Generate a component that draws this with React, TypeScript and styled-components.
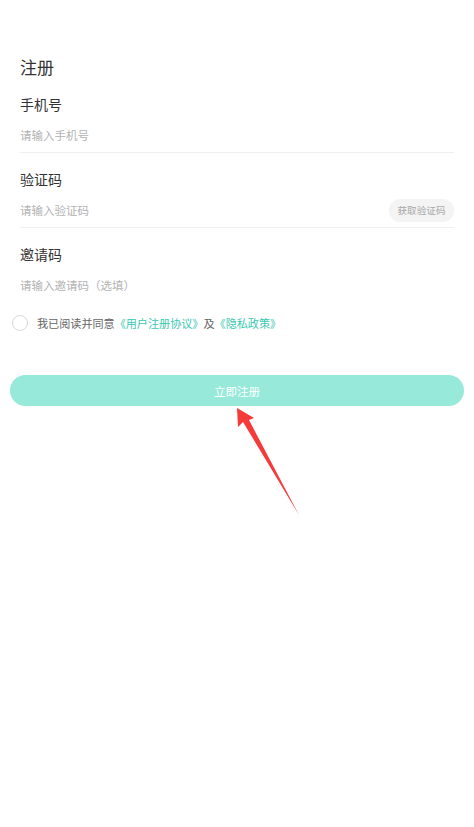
import styled, { createGlobalStyle } from "styled-components";

const GlobalStyle = createGlobalStyle`
  html, body {
    margin: 0;
    padding: 0;
    background: #ffffff;
  }
  body {
    font-family: "Noto Sans CJK SC", "Noto Sans", sans-serif;
    color: #333333;
  }
  * {
    box-sizing: border-box;
  }
`;

type Field = {
  label: string;
  placeholder: string;
  withCode?: boolean;
  divider?: boolean;
};

const fields: Field[] = [
  { label: "手机号", placeholder: "请输入手机号", divider: true },
  { label: "验证码", placeholder: "请输入验证码", withCode: true, divider: true },
  { label: "邀请码", placeholder: "请输入邀请码（选填）", divider: false },
];

export default function App() {
  return (
    <>
      <GlobalStyle />
      <Page>
        <Title>注册</Title>
        <Form>
          {fields.map((field) => (
            <FieldBlock key={field.label} $divider={field.divider}>
              <Label>{field.label}</Label>
              <InputRow>
                <Input placeholder={field.placeholder} />
                {field.withCode && <CodeButton>获取验证码</CodeButton>}
              </InputRow>
            </FieldBlock>
          ))}
        </Form>
        <Agreement>
          <Radio />
          <AgreeText>
            我已阅读并同意<Link>《用户注册协议》</Link>及<Link>《隐私政策》</Link>
          </AgreeText>
        </Agreement>
        <SubmitButton>立即注册</SubmitButton>
        <Arrow viewBox="0 0 70 115" aria-hidden="true">
          <polygon points="3,2 20,12 15,14 65,109 9,16 4,21" fill="#f53a3a" />
        </Arrow>
      </Page>
    </>
  );
}

const Page = styled.div`
  position: relative;
  width: 474px;
  min-height: 827px;
  padding: 55px 20px 0;
  background: #ffffff;
`;

const Title = styled.h1`
  margin: 0;
  font-size: 17px;
  line-height: 23px;
  font-weight: 400;
  color: #333333;
`;

const Form = styled.div`
  display: flex;
  flex-direction: column;
`;

const FieldBlock = styled.div<{ $divider?: boolean }>`
  display: flex;
  flex-direction: column;
  gap: 6px;
  padding: 16px 0 2px;
  border-bottom: 1px solid ${(p) => (p.$divider ? "#f0f0f0" : "transparent")};
`;

const Label = styled.div`
  font-size: 14px;
  line-height: 20px;
  color: #333333;
`;

const InputRow = styled.div`
  display: flex;
  align-items: center;
  justify-content: space-between;
  height: 30px;
`;

const Input = styled.input`
  flex: 1;
  min-width: 0;
  border: none;
  outline: none;
  padding: 0;
  background: transparent;
  font-family: inherit;
  font-size: 11.5px;
  color: #333333;

  &::placeholder {
    color: #b3b3b3;
  }
`;

const CodeButton = styled.button`
  width: 65px;
  height: 23px;
  border: none;
  border-radius: 12px;
  background: #f4f4f4;
  color: #a8a8a8;
  font-family: inherit;
  font-size: 9.6px;
  padding: 0;
  white-space: nowrap;
`;

const Agreement = styled.div`
  display: flex;
  align-items: center;
  gap: 9px;
  height: 20px;
  margin: 10px 0 0 -8px;
`;

const Radio = styled.span`
  width: 16px;
  height: 16px;
  border-radius: 50%;
  border: 1px solid #d9d9d9;
  background: #ffffff;
`;

const AgreeText = styled.span`
  font-size: 11.1px;
  color: #666666;
  white-space: nowrap;
`;

const Link = styled.span`
  color: #38c9b1;
`;

const SubmitButton = styled.button`
  display: block;
  width: 454px;
  height: 31px;
  margin: 42px 0 0 -10px;
  border: none;
  border-radius: 16px;
  background: #97e9da;
  color: #ffffff;
  font-family: inherit;
  font-size: 11.5px;
  padding: 0;
`;

const Arrow = styled.svg`
  position: absolute;
  left: 234px;
  top: 406px;
  width: 70px;
  height: 115px;
`;
